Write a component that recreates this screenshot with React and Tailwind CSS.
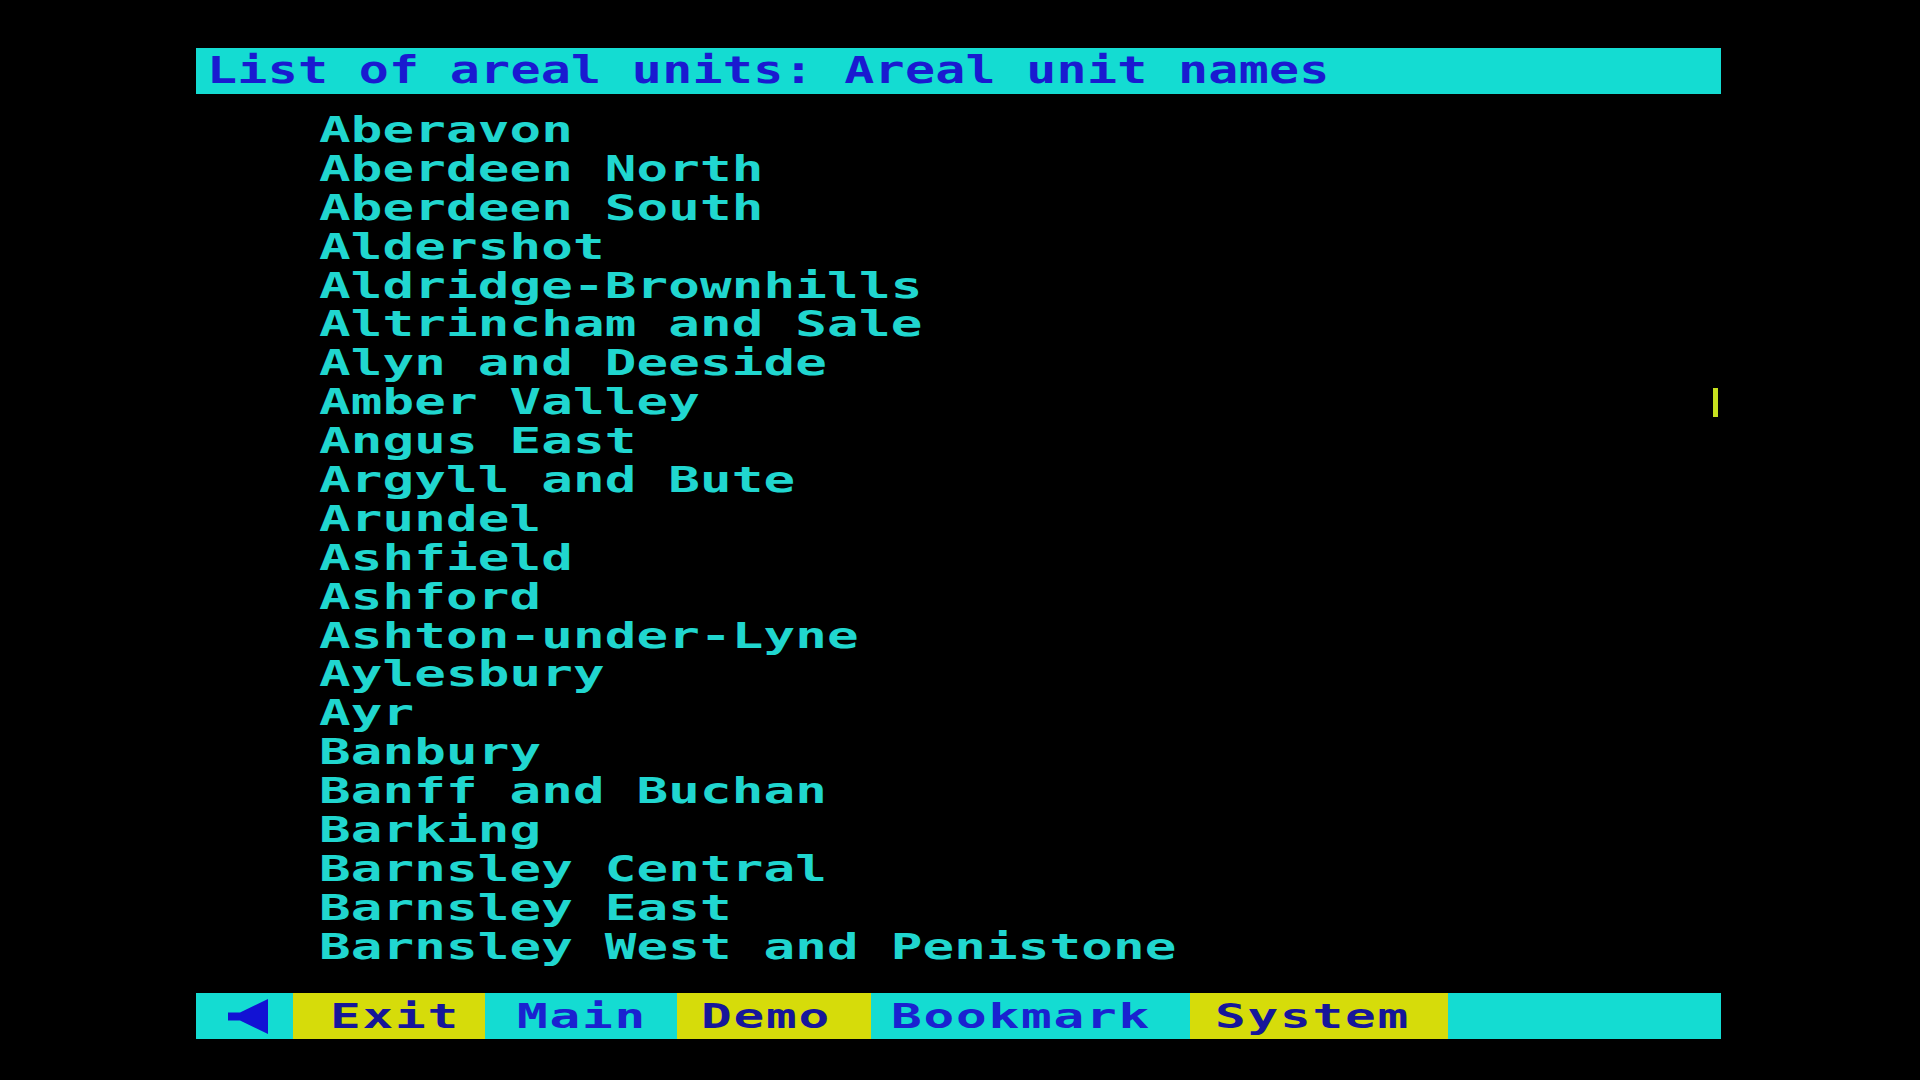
import React from 'react';

const areas = [
  'Aberavon',
  'Aberdeen North',
  'Aberdeen South',
  'Aldershot',
  'Aldridge-Brownhills',
  'Altrincham and Sale',
  'Alyn and Deeside',
  'Amber Valley',
  'Angus East',
  'Argyll and Bute',
  'Arundel',
  'Ashfield',
  'Ashford',
  'Ashton-under-Lyne',
  'Aylesbury',
  'Ayr',
  'Banbury',
  'Banff and Buchan',
  'Barking',
  'Barnsley Central',
  'Barnsley East',
  'Barnsley West and Penistone',
];

// bottom menu cells, widths and text offsets measured off the screen
const menu = [
  { label: 'Exit', w: 'w-[192px]', pl: 'pl-[37px]', bg: 'bg-[#d6dc0a]', fg: 'text-[#16169a]' },
  { label: 'Main', w: 'w-[192px]', pl: 'pl-[32px]', bg: 'bg-[#14dcd2]', fg: 'text-[#1a22d0]' },
  { label: 'Demo', w: 'w-[194px]', pl: 'pl-[24px]', bg: 'bg-[#d6dc0a]', fg: 'text-[#16169a]' },
  { label: 'Bookmark', w: 'w-[319px]', pl: 'pl-[20px]', bg: 'bg-[#14dcd2]', fg: 'text-[#1a22d0]' },
  { label: 'System', w: 'w-[258px]', pl: 'pl-[25px]', bg: 'bg-[#d6dc0a]', fg: 'text-[#16169a]' },
];

function BackArrow() {
  return (
    <svg width="40" height="35" viewBox="0 0 40 35" className="block">
      <path d="M40 0 V35 L12 21.5 H0 V13.5 H12 Z" fill="#1212d4" />
    </svg>
  );
}

export default function App() {
  return (
    <div className="min-h-screen w-full bg-black font-['DejaVu_Sans_Mono',monospace]">
      <div className="ml-[196px] w-[1525px] pt-[48px]">
        {/* Title bar */}
        <div className="h-[46px] bg-[#14dcd2] pl-[11px] flex items-center overflow-hidden">
          <span className="inline-block origin-left scale-x-[1.35] text-[37px] leading-[46px] tracking-[0.2px] font-semibold text-[#1a1ad0] whitespace-pre">
            List of areal units: Areal unit names
          </span>
        </div>

        {/* List */}
        <div className="mt-[17px] pl-[123px] h-[856px]">
          {areas.map((name) => (
            <div key={name} className="h-[38.9px] flex items-center">
              <span className="inline-block origin-left scale-x-[1.5] text-[35px] leading-[38.9px] tracking-[0.1px] font-bold text-[#20d6cf] whitespace-pre">
                {name}
              </span>
              {name === 'Amber Valley' && (
                <span className="ml-auto mr-[3px] w-[5px] h-[29px] bg-[#c6e01e]" />
              )}
            </div>
          ))}
        </div>

        {/* Bottom menu */}
        <div className="mt-[26px] h-[46px] flex">
          <div className="w-[97px] bg-[#14dcd2] flex items-center pl-[32px]">
            <BackArrow />
          </div>
          {menu.map((m) => (
            <div key={m.label} className={`${m.w} ${m.pl} ${m.bg} flex items-center overflow-hidden`}>
              <span className={`inline-block origin-left scale-x-[1.5] text-[34px] leading-[46px] tracking-[1.2px] font-bold whitespace-pre ${m.fg}`}>
                {m.label}
              </span>
            </div>
          ))}
          <div className="flex-1 bg-[#14dcd2]" />
        </div>
      </div>
    </div>
  );
}
